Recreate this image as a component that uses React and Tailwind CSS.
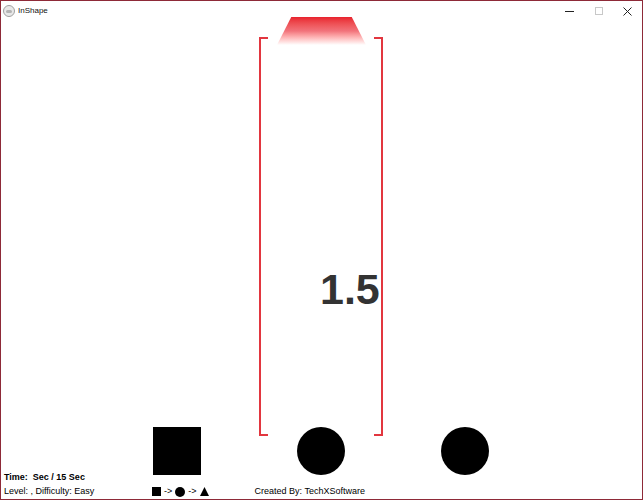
import React from 'react'

function TitleBar() {
  return (
    <div className='h-[20px] flex flex-row items-center bg-white'>
      <div className='ml-[2px] w-[12px] h-[12px] rounded-full border border-[#a0a0a0] bg-[#e8e8e8] flex items-center justify-center'>
        <div className='w-[6px] h-[3px] bg-[#b4b4b4] rounded-sm' />
      </div>
      <span className='ml-[3px] text-[8px] text-[#111] leading-none'>InShape</span>
      <div className='ml-auto flex flex-row h-full'>
        <div className='w-[29px] h-full flex items-center justify-center'>
          <svg width='9' height='9' viewBox='0 0 9 9'>
            <path d='M0 4.5H9' stroke='#222' strokeWidth='1' />
          </svg>
        </div>
        <div className='w-[29px] h-full flex items-center justify-center'>
          <svg width='8' height='8' viewBox='0 0 8 8'>
            <rect x='0.5' y='0.5' width='7' height='7' fill='none' stroke='#c8c8c8' strokeWidth='1' />
          </svg>
        </div>
        <div className='w-[29px] h-full flex items-center justify-center'>
          <svg width='9' height='9' viewBox='0 0 9 9'>
            <path d='M0.5 0.5L8.5 8.5M8.5 0.5L0.5 8.5' stroke='#222' strokeWidth='1' />
          </svg>
        </div>
      </div>
    </div>
  )
}

function Legend() {
  return (
    <div className='flex flex-row items-center gap-[3px] text-[9px]'>
      <div className='w-[9px] h-[9px] bg-black' />
      <span>-&gt;</span>
      <div className='w-[10px] h-[10px] rounded-full bg-black' />
      <span>-&gt;</span>
      <svg width='9' height='9' viewBox='0 0 9 9'>
        <path d='M4.5 0L9 9H0Z' fill='black' />
      </svg>
    </div>
  )
}

export default function App() {
  return (
    <div className='relative w-[643px] h-[500px] bg-white border border-[#8e2a38] flex flex-col overflow-hidden font-["Liberation_Sans",Arial,sans-serif]'>
      <TitleBar />

      {/* game field */}
      <div className='absolute left-[276px] top-[16px] w-[89px] h-[28px] bg-gradient-to-b from-[#e81f2d] via-[#f2737b] to-white [clip-path:polygon(16%_0,84%_0,100%_100%,0_100%)]' />
      <div className='absolute left-[258px] top-[36px] w-[9px] h-[399px] border-l-2 border-t-2 border-b-2 border-[#e2363f]' />
      <div className='absolute left-[373px] top-[36px] w-[9px] h-[399px] border-r-2 border-t-2 border-b-2 border-[#e2363f]' />
      <div className='absolute left-[319px] top-[267px] text-[43px] leading-[43px] font-bold text-[#333]'>1.5</div>

      <div className='flex-1 flex flex-col justify-end'>
        <div className='h-[45px] flex flex-row items-start pl-[152px] gap-[96px]'>
          <div className='w-[48px] h-[48px] bg-black shrink-0' />
          <div className='w-[48px] h-[48px] rounded-full bg-black shrink-0' />
          <div className='w-[48px] h-[48px] rounded-full bg-black shrink-0' />
        </div>
        <div className='h-[12px] flex items-center pl-[3px] text-[9px] font-bold text-black'>
          <span className='whitespace-pre'>Time:  Sec / 15 Sec</span>
        </div>
        <div className='h-[15px] flex flex-row items-center text-[9px] text-black'>
          <span className='pl-[3px] w-[151px] whitespace-pre'>Level: , Difficulty: Easy</span>
          <Legend />
          <span className='ml-[46px]'>Created By: TechXSoftware</span>
        </div>
      </div>
    </div>
  )
}
